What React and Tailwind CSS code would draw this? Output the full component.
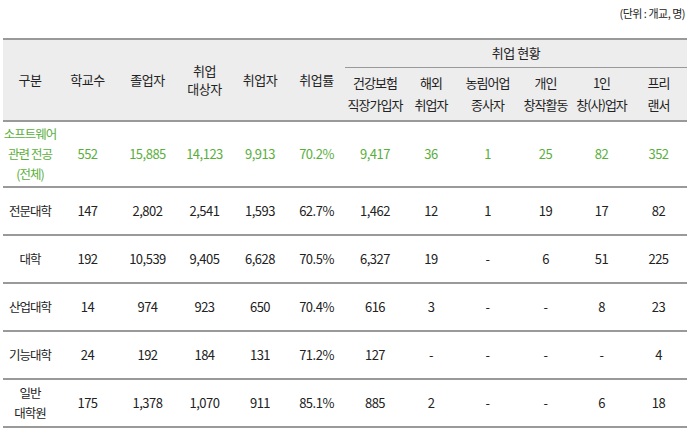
const cols = [54, 61, 59, 55, 56, 57, 60, 52, 61, 55, 57, 57]

const rows = [
  { name: ['소프트웨어', '관련 전공', '(전체)'], vals: ['552', '15,885', '14,123', '9,913', '70.2%', '9,417', '36', '1', '25', '82', '352'], green: true, h: 'h-[66px]' },
  { name: ['전문대학'], vals: ['147', '2,802', '2,541', '1,593', '62.7%', '1,462', '12', '1', '19', '17', '82'] },
  { name: ['대학'], vals: ['192', '10,539', '9,405', '6,628', '70.5%', '6,327', '19', '-', '6', '51', '225'] },
  { name: ['산업대학'], vals: ['14', '974', '923', '650', '70.4%', '616', '3', '-', '-', '8', '23'] },
  { name: ['기능대학'], vals: ['24', '192', '184', '131', '71.2%', '127', '-', '-', '-', '-', '4'] },
  { name: ['일반', '대학원'], vals: ['175', '1,378', '1,070', '911', '85.1%', '885', '2', '-', '-', '6', '18'] },
]

const subHeads = [['건강보험', '직장가입자'], ['해외', '취업자'], ['농림어업', '종사자'], ['개인', '창작활동'], ['1인', '창(사)업자'], ['프리', '랜서']]

export default function App() {
  return (
    <div className="w-[691px] h-[433px] bg-white text-[13px] text-[#222] leading-[18px] overflow-hidden" style={{ fontFamily: '"Noto Sans CJK KR", "Noto Sans", sans-serif' }}>
      <div className="h-[38px] pr-[6px] pt-[4px] text-right text-[11px] tracking-[-0.5px]">(단위 : 개교, 명)</div>
      <table className="ml-[3px] border-collapse table-fixed tracking-[-0.5px]">
        <colgroup>
          {cols.map((w, i) => <col key={i} style={{ width: w }} />)}
        </colgroup>
        <thead className="bg-[#ededed]">
          <tr className="h-[28px] border-t-2 border-[#999]">
            {['구분', '학교수', '졸업자', ['취업', '대상자'], '취업자', '취업률'].map((h, i) => (
              <th key={i} rowSpan={2} className="font-normal text-center">
                {Array.isArray(h) ? h.map(t => <div key={t}>{t}</div>) : h}
              </th>
            ))}
            <th colSpan={6} className="font-normal text-center border-b border-[#999]">취업 현황</th>
          </tr>
          <tr className="h-[54px] border-b-2 border-[#999]">
            {subHeads.map((h, i) => (
              <th key={i} className="font-normal text-center leading-[22px] whitespace-nowrap tracking-[-1px]">
                {h.map(t => <div key={t}>{t}</div>)}
              </th>
            ))}
          </tr>
        </thead>
        <tbody>
          {rows.map((r, i) => (
            <tr key={i} className={`${r.h || 'h-[48px]'} border-b-2 border-[#999] ${r.green ? 'text-[#5aaf3c]' : ''}`}>
              <td className="text-center leading-[20px] whitespace-nowrap tracking-[-1px] text-[12.5px]">{r.name.map(t => <div key={t}>{t}</div>)}</td>
              {r.vals.map((v, j) => <td key={j} className="text-center">{v}</td>)}
            </tr>
          ))}
        </tbody>
      </table>
    </div>
  )
}
